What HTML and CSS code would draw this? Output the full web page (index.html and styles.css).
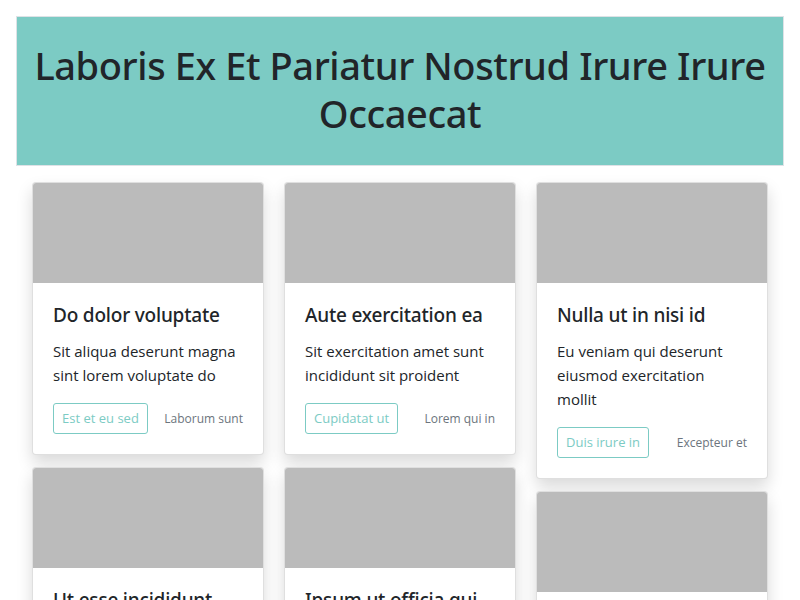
FILE: index.html
```html
<!DOCTYPE html>
<html lang="en">
<head>
<meta charset="utf-8">
<title>Cards</title>
<link rel="stylesheet" href="styles.css">
</head>
<body>
<div class="page">
  <header class="hero">
    <h1>Laboris Ex Et Pariatur Nostrud Irure Irure Occaecat</h1>
  </header>
  <main class="board">
    <div class="col">
      <article class="card">
        <div class="card-img"></div>
        <div class="card-body">
          <h5 class="card-title">Do dolor voluptate</h5>
          <p class="card-text">Sit aliqua deserunt magna sint lorem voluptate do</p>
          <div class="card-foot"><button class="btn">Est et eu sed</button><span class="muted">Laborum sunt</span></div>
        </div>
      </article>
      <article class="card">
        <div class="card-img"></div>
        <div class="card-body">
          <h5 class="card-title">Ut esse incididunt</h5>
          <p class="card-text">Aliqua magna dolore nulla ex officia tempor</p>
          <div class="card-foot"><button class="btn">Amet culpa</button><span class="muted">Nisi anim</span></div>
        </div>
      </article>
    </div>
    <div class="col">
      <article class="card">
        <div class="card-img"></div>
        <div class="card-body">
          <h5 class="card-title">Aute exercitation ea</h5>
          <p class="card-text">Sit exercitation amet sunt incididunt sit proident</p>
          <div class="card-foot"><button class="btn">Cupidatat ut</button><span class="muted">Lorem qui in</span></div>
        </div>
      </article>
      <article class="card">
        <div class="card-img"></div>
        <div class="card-body">
          <h5 class="card-title">Ipsum ut officia qui</h5>
          <p class="card-text">Velit eiusmod anim laboris commodo esse</p>
          <div class="card-foot"><button class="btn">Minim elit</button><span class="muted">Sunt aute</span></div>
        </div>
      </article>
    </div>
    <div class="col">
      <article class="card">
        <div class="card-img"></div>
        <div class="card-body">
          <h5 class="card-title">Nulla ut in nisi id</h5>
          <p class="card-text">Eu veniam qui deserunt eiusmod exercitation mollit</p>
          <div class="card-foot"><button class="btn">Duis irure in</button><span class="muted">Excepteur et</span></div>
        </div>
      </article>
      <article class="card">
        <div class="card-img"></div>
        <div class="card-body">
          <h5 class="card-title">Enim ad veniam</h5>
          <p class="card-text">Consequat ullamco non proident fugiat</p>
          <div class="card-foot"><button class="btn">Quis irure</button><span class="muted">Ea dolor</span></div>
        </div>
      </article>
    </div>
  </main>
</div>
</body>
</html>
```
FILE: styles.css
```css
html, body {
  margin: 0;
  padding: 0;
  background: #fff;
}
body {
  font-family: "Open Sans", "Noto Sans", sans-serif;
  color: #212529;
}
.page {
  padding: 16px;
}
.hero {
  background: #7ccbc4;
  border: 1px solid #dee2e6;
  padding: 24px 16px 20px;
  text-align: center;
}
.hero h1 {
  margin: 0 0 8px;
  font-family: "Noto Sans", "Open Sans", sans-serif;
  font-size: 38px;
  line-height: 48px;
  font-weight: 500;
  letter-spacing: -0.4px;
}
.board {
  display: flex;
  gap: 20px;
  padding: 16px 16px 0;
}
.col {
  flex: 1;
  min-width: 0;
  display: flex;
  flex-direction: column;
  gap: 12px;
}
.card {
  background: #fff;
  border: 1px solid rgba(0, 0, 0, 0.125);
  border-radius: 4px;
  box-shadow: 0 8px 16px rgba(0, 0, 0, 0.15);
  overflow: hidden;
}
.card-img {
  height: 100px;
  background: #bbbbbb;
}
.card-body {
  padding: 20px;
}
.card-title {
  margin: 0 0 12px;
  font-family: "Noto Sans", "Open Sans", sans-serif;
  font-size: 19px;
  line-height: 24px;
  font-weight: 500;
  letter-spacing: -0.2px;
}
.card-text {
  margin: 0 0 16px;
  font-size: 15px;
  line-height: 24px;
}
.card-foot {
  display: flex;
  justify-content: space-between;
  align-items: center;
}
.btn {
  font-family: inherit;
  font-size: 13px;
  line-height: 21px;
  padding: 4px 8px;
  border: 1px solid #7ccbc4;
  border-radius: 3px;
  background: transparent;
  color: #7ccbc4;
}
.muted {
  font-size: 12px;
  color: #6c757d;
}
```
